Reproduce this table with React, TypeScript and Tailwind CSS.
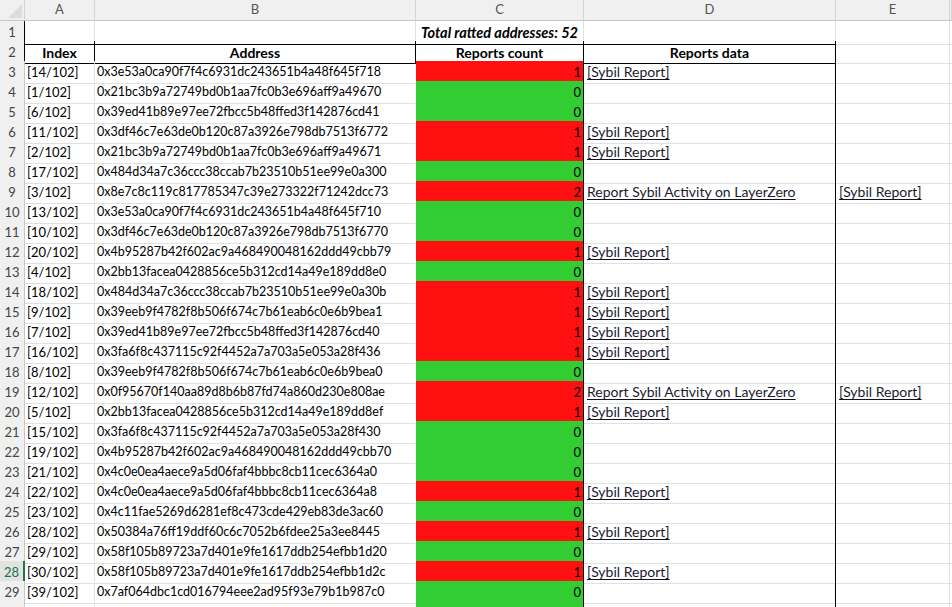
import React from "react";

type Row = { n: number; idx: string; addr: string; cnt: number; d?: string; e?: string };

const SR = "[Sybil Report]";
const LZ = "Report Sybil Activity on LayerZero";

const rows: Row[] = [
  { n: 3, idx: "[14/102]", addr: "0x3e53a0ca90f7f4c6931dc243651b4a48f645f718", cnt: 1, d: SR },
  { n: 4, idx: "[1/102]", addr: "0x21bc3b9a72749bd0b1aa7fc0b3e696aff9a49670", cnt: 0 },
  { n: 5, idx: "[6/102]", addr: "0x39ed41b89e97ee72fbcc5b48ffed3f142876cd41", cnt: 0 },
  { n: 6, idx: "[11/102]", addr: "0x3df46c7e63de0b120c87a3926e798db7513f6772", cnt: 1, d: SR },
  { n: 7, idx: "[2/102]", addr: "0x21bc3b9a72749bd0b1aa7fc0b3e696aff9a49671", cnt: 1, d: SR },
  { n: 8, idx: "[17/102]", addr: "0x484d34a7c36ccc38ccab7b23510b51ee99e0a300", cnt: 0 },
  { n: 9, idx: "[3/102]", addr: "0x8e7c8c119c817785347c39e273322f71242dcc73", cnt: 2, d: LZ, e: SR },
  { n: 10, idx: "[13/102]", addr: "0x3e53a0ca90f7f4c6931dc243651b4a48f645f710", cnt: 0 },
  { n: 11, idx: "[10/102]", addr: "0x3df46c7e63de0b120c87a3926e798db7513f6770", cnt: 0 },
  { n: 12, idx: "[20/102]", addr: "0x4b95287b42f602ac9a468490048162ddd49cbb79", cnt: 1, d: SR },
  { n: 13, idx: "[4/102]", addr: "0x2bb13facea0428856ce5b312cd14a49e189dd8e0", cnt: 0 },
  { n: 14, idx: "[18/102]", addr: "0x484d34a7c36ccc38ccab7b23510b51ee99e0a30b", cnt: 1, d: SR },
  { n: 15, idx: "[9/102]", addr: "0x39eeb9f4782f8b506f674c7b61eab6c0e6b9bea1", cnt: 1, d: SR },
  { n: 16, idx: "[7/102]", addr: "0x39ed41b89e97ee72fbcc5b48ffed3f142876cd40", cnt: 1, d: SR },
  { n: 17, idx: "[16/102]", addr: "0x3fa6f8c437115c92f4452a7a703a5e053a28f436", cnt: 1, d: SR },
  { n: 18, idx: "[8/102]", addr: "0x39eeb9f4782f8b506f674c7b61eab6c0e6b9bea0", cnt: 0 },
  { n: 19, idx: "[12/102]", addr: "0x0f95670f140aa89d8b6b87fd74a860d230e808ae", cnt: 2, d: LZ, e: SR },
  { n: 20, idx: "[5/102]", addr: "0x2bb13facea0428856ce5b312cd14a49e189dd8ef", cnt: 1, d: SR },
  { n: 21, idx: "[15/102]", addr: "0x3fa6f8c437115c92f4452a7a703a5e053a28f430", cnt: 0 },
  { n: 22, idx: "[19/102]", addr: "0x4b95287b42f602ac9a468490048162ddd49cbb70", cnt: 0 },
  { n: 23, idx: "[21/102]", addr: "0x4c0e0ea4aece9a5d06faf4bbbc8cb11cec6364a0", cnt: 0 },
  { n: 24, idx: "[22/102]", addr: "0x4c0e0ea4aece9a5d06faf4bbbc8cb11cec6364a8", cnt: 1, d: SR },
  { n: 25, idx: "[23/102]", addr: "0x4c11fae5269d6281ef8c473cde429eb83de3ac60", cnt: 0 },
  { n: 26, idx: "[28/102]", addr: "0x50384a76ff19ddf60c6c7052b6fdee25a3ee8445", cnt: 1, d: SR },
  { n: 27, idx: "[29/102]", addr: "0x58f105b89723a7d401e9fe1617ddb254efbb1d20", cnt: 0 },
  { n: 28, idx: "[30/102]", addr: "0x58f105b89723a7d401e9fe1617ddb254efbb1d2c", cnt: 1, d: SR },
  { n: 29, idx: "[39/102]", addr: "0x7af064dbc1cd016794eee2ad95f93e79b1b987c0", cnt: 0 },
];

const GRID = "grid grid-cols-[25px_70px_321px_168px_252px_114px_2px]";
const FONT = { fontFamily: "Lato, 'Open Sans', sans-serif" };

function Link({ text }: { text: string }) {
  return <span className="underline decoration-[#111122] underline-offset-2 text-[#1a1a2e] text-[14px]">{text}</span>;
}

export default function App() {
  return (
    <div className="w-[952px] h-[607px] overflow-hidden bg-white text-[12.5px] text-black" style={FONT}>
      {/* column headers */}
      <div className={`${GRID} h-[21px] bg-[#f0f0f0] text-[#555] text-[13px]`}>
        <div className="relative border-r border-b border-r-[#d4d4d4] border-b-[#c8c8c8]">
          <svg className="absolute right-[2px] bottom-[2px]" width="14" height="14" viewBox="0 0 14 14">
            <polygon points="14,0 14,14 0,14" fill="#dcdcdc" />
          </svg>
        </div>
        {["A", "B", "C", "D", "E", ""].map((l, i) => (
          <div key={i} className="flex items-center justify-center border-r border-b border-r-[#d4d4d4] border-b-[#c8c8c8]">
            {l}
          </div>
        ))}
      </div>

      {/* row 1 */}
      <div className={`${GRID} h-5`}>
        <div className="flex items-center justify-center bg-[#f0f0f0] text-[#444] text-[13px] pt-[1px] border-r border-b border-r-black border-b-[#d4d4d4]">1</div>
        <div className="border-r border-b border-r-[#e1e1e1] border-b-black" />
        <div className="border-r border-b border-r-[#e1e1e1] border-b-black" />
        <div className="flex items-center justify-center pt-[1px] text-[14.5px] font-bold italic whitespace-nowrap border-r border-b border-r-[#e1e1e1] border-b-black">
          Total ratted addresses: 52
        </div>
        <div className="border-r border-b border-r-[#e1e1e1] border-b-black" />
        <div className="border-r border-b border-r-[#e1e1e1] border-b-[#e1e1e1]" />
        <div className="border-b border-b-[#e1e1e1]" />
      </div>

      {/* row 2 */}
      <div className={`${GRID} h-5 font-bold text-[14px]`}>
        <div className="flex items-center justify-center bg-[#f0f0f0] text-[#444] text-[13px] pt-[1px] font-normal border-r border-b border-r-black border-b-[#d4d4d4]">2</div>
        <div className="flex items-center justify-center pt-[1px] border-r border-b border-black">Index</div>
        <div className="flex items-center justify-center pt-[1px] border-r border-b border-black">Address</div>
        <div className="flex items-center justify-center pt-[1px] border-r border-b border-black">Reports count</div>
        <div className="flex items-center justify-center pt-[1px] border-r border-b border-black">Reports data</div>
        <div className="border-r border-b border-r-[#e1e1e1] border-b-[#e1e1e1]" />
        <div className="border-b border-b-[#e1e1e1]" />
      </div>

      {rows.map((r) => {
        const sel = r.n === 28;
        return (
          <div key={r.n} className={`${GRID} h-5`}>
            <div
              className={
                sel
                  ? "flex items-center justify-center pt-[1px] bg-[#e2e2e2] text-[#217346] text-[13px] border-r-2 border-b border-r-[#217346] border-b-[#d4d4d4]"
                  : "flex items-center justify-center pt-[1px] bg-[#f0f0f0] text-[#444] text-[13px] border-r border-b border-r-[#c8c8c8] border-b-[#d4d4d4]"
              }
            >
              {r.n}
            </div>
            <div className="flex items-center pl-[2px] pt-[2px] text-[13px] whitespace-nowrap border-r border-b border-r-[#e1e1e1] border-b-[#e1e1e1]">
              {r.idx}
            </div>
            <div className="flex items-center pl-[2px] pt-[2px] whitespace-nowrap border-r border-b border-r-transparent border-b-[#e1e1e1]">
              {r.addr}
            </div>
            <div
              className={
                r.cnt > 0
                  ? "flex items-center justify-end pr-[2px] pt-[2px] text-[13px] bg-[#ff1010] border-r border-b border-r-black border-b-transparent"
                  : "flex items-center justify-end pr-[2px] pt-[2px] text-[13px] bg-[#32cd32] border-r border-b border-r-black border-b-transparent"
              }
            >
              {r.cnt}
            </div>
            <div className="flex items-center pl-[3px] whitespace-nowrap border-r border-b border-r-black border-b-[#e1e1e1]">
              {r.d ? <Link text={r.d} /> : null}
            </div>
            <div className="flex items-center pl-[3px] whitespace-nowrap border-r border-b border-r-[#e1e1e1] border-b-[#e1e1e1]">
              {r.e ? <Link text={r.e} /> : null}
            </div>
            <div className="border-b border-b-[#e1e1e1]" />
          </div>
        );
      })}

      {/* partially visible row 30 */}
      <div className={`${GRID} h-5`}>
        <div className="bg-[#f0f0f0] border-r border-r-[#c8c8c8]" />
        <div className="border-r border-r-[#e1e1e1]" />
        <div className="border-r border-r-transparent" />
        <div className="bg-[#32cd32] border-r border-r-black" />
        <div className="border-r border-r-black" />
        <div className="border-r border-r-[#e1e1e1]" />
        <div />
      </div>
    </div>
  );
}
